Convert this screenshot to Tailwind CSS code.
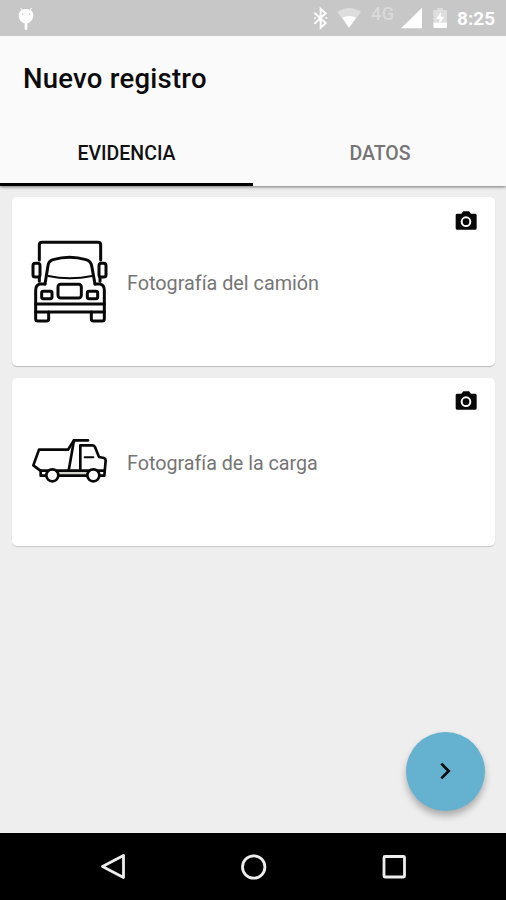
<!DOCTYPE html>
<html lang="es">
<head>
<meta charset="utf-8">
<meta name="viewport" content="width=device-width, initial-scale=1">
<title>Nuevo registro</title>
<script src="https://cdn.jsdelivr.net/npm/@tailwindcss/browser@4"></script>
</head>
<body class="font-[Roboto,sans-serif] bg-[#eeeeee]">
<div class="relative flex h-[900px] w-[506px] flex-col overflow-hidden bg-[#eeeeee]">
  <!-- Status bar -->
  <div class="z-20 flex h-[35.5px] shrink-0 items-start justify-between bg-[#c7c7c7]">
    <svg class="ml-4 h-9 w-5" viewBox="48 0 60 108" fill="#fff">
      <path d="M62 24l7 9M95 24l-7 9" stroke="#fff" stroke-width="3"/>
      <path d="M56 45C57 33 66 27 78 27s21 6 22 18c0 13-8 23-18 25v16a4 4 0 0 1-8 0V70C64 68 56 58 56 45z"/>
      <circle cx="68" cy="42" r="2.5" fill="#c7c7c7"/><circle cx="89" cy="42" r="2.5" fill="#c7c7c7"/>
    </svg>
    <div class="flex h-[35px]">
      <svg class="h-[35px] w-[71px]" viewBox="0 0 213 105">
        <path d="M43 38l34 31-15 14V27l15 13-34 31" fill="none" stroke="#fff" stroke-width="6"/>
        <path d="M42 54h6M76 54h6" stroke="#fff" stroke-width="5"/>
        <path d="M112 36Q147 12 183 36L147 83z" fill="#dddddd"/>
        <path d="M127 53Q147 43 168 53L147 83z" fill="#fff"/>
      </svg>
      <span class="mt-[5px] w-[30px] text-[18px] leading-[18px] font-medium tracking-[0.6px] text-[#dadada]">4G</span>
      <svg class="h-[35px] w-[55px]" viewBox="303 0 165 105">
        <path d="M303 85L366 23v62z" fill="#fff"/>
        <path d="M400 30h12v-6h17v6h12v40h-41z" fill="#dedede"/>
        <path d="M400 68h41v12q0 4-4 4h-33q-4 0-4-4z" fill="#fff"/>
        <path d="M423 36l-15 21h11l-2 16 16-23h-11z" fill="#fff"/>
      </svg>
      <span class="mt-[9px] mr-[10px] ml-px w-[39px] text-[19px] leading-[20px] font-bold whitespace-nowrap text-white">8:25</span>
    </div>
  </div>

  <!-- App bar and tabs -->
  <header class="z-10 flex h-[150.5px] shrink-0 flex-col bg-[#fafafa] shadow-[0_1px_3px_rgba(0,0,0,0.5)]">
    <h1 class="h-[85px] pt-[27px] pl-[23px] text-[27.5px] leading-[32px] font-medium tracking-[0.25px] text-[#0b0b0b]">Nuevo registro</h1>
    <nav class="grid flex-1 grid-cols-2 text-center text-[19.5px] leading-[24px] font-medium">
      <div class="border-b-[3px] border-black pt-[21px] text-[#111]">EVIDENCIA</div>
      <div class="pt-[21px] pl-px text-[#757575]">DATOS</div>
    </nav>
  </header>

  <main class="flex flex-1 flex-col gap-[12px] px-[11.5px] pt-[11px]">
    <section class="flex h-[169px] rounded-[5px] bg-white pl-2 shadow-[0_1px_1px_rgba(0,0,0,0.22)]">
      <svg class="mt-[33px] size-[100px]" viewBox="0 0 300 300" fill="none" stroke="#080808" stroke-width="9" stroke-linejoin="round" stroke-linecap="round">
        <path d="M58 90V45q0-8 8-8h168q8 0 8 8v45"/>
        <rect x="39" y="100" width="21" height="41" rx="7"/><rect x="237" y="100" width="21" height="41" rx="7"/>
        <path d="M58 142v12M240 142v12"/>
        <path d="M75 162L84 107Q86 93 99 89Q149 74 198 89Q212 93 215 107L225 162"/>
        <path d="M85 138Q149 152 216 138" stroke-width="6"/>
        <path d="M75 162H60Q47 165 47 181v65h206v-65q0-16-13-19H225"/>
        <rect x="114" y="163" width="70" height="41" rx="8"/>
        <rect x="65" y="184" width="31" height="22" rx="5"/><rect x="202" y="184" width="31" height="22" rx="5"/>
        <path d="M47 222h206M47 246v20q0 7 7 7h25q7 0 7-7v-20M214 246v20q0 7 7 7h25q7 0 7-7v-20"/>
      </svg>
      <p class="mt-[74px] ml-[7.5px] flex-1 text-[19.8px] leading-[26px] whitespace-nowrap text-[#757575]">Fotografía del camión</p>
      <svg class="mt-[14px] mr-[18px] h-[20px] w-[22px]" viewBox="0 0 66 60">
        <path fill="#080808" fill-rule="evenodd" d="M6 8h13l6-7h17l6 7h13q4 0 4 5v38q0 5-4 5H6q-4 0-4-5V13q0-5 4-5zm27 8a16 16 0 1 0 0 32a16 16 0 1 0 0-32zm0 6a10 10 0 1 1 0 20a10 10 0 1 1 0-20z"/>
      </svg>
    </section>
    <section class="flex h-[168px] rounded-[5px] bg-white pl-2 shadow-[0_1px_1px_rgba(0,0,0,0.16)]">
      <svg class="mt-[47px] h-[70px] w-[100px]" viewBox="0 0 300 210" fill="none" stroke="#080808" stroke-width="8" stroke-linejoin="round" stroke-linecap="round">
        <path d="M115 137h90v15h-90z" fill="#d5d5d0" stroke="none"/>
        <path d="M204 46H162L144 74H57L40 121 61 137H251"/>
        <path d="M162 46L146 137"/>
        <path d="M181 137V61h37q5 0 7 5l12 30 15 3q5 2 5 7l-4 46h-12"/>
        <path d="M62 137v15h17M115 152h87"/>
        <path d="M194 97h26" stroke-width="6"/>
        <circle cx="97" cy="151" r="18" fill="#fff"/><circle cx="220" cy="151" r="18" fill="#fff"/>
      </svg>
      <p class="mt-[73px] ml-[7.5px] flex-1 text-[19.7px] leading-[26px] whitespace-nowrap text-[#757575]">Fotografía de la carga</p>
      <svg class="mt-[13px] mr-[18px] h-[20px] w-[22px]" viewBox="0 0 66 60">
        <path fill="#080808" fill-rule="evenodd" d="M6 8h13l6-7h17l6 7h13q4 0 4 5v38q0 5-4 5H6q-4 0-4-5V13q0-5 4-5zm27 8a16 16 0 1 0 0 32a16 16 0 1 0 0-32zm0 6a10 10 0 1 1 0 20a10 10 0 1 1 0-20z"/>
      </svg>
    </section>
  </main>

  <!-- Floating action button -->
  <button aria-label="Siguiente" class="absolute right-[21.5px] bottom-[89.5px] flex size-[79px] items-center justify-center rounded-full bg-[#64b2cf] shadow-[0_5px_7px_rgba(0,0,0,0.28)]">
    <svg class="h-[18px] w-[12px]" viewBox="0 0 36 54" fill="none" stroke="#0a0a0a" stroke-width="8"><path d="M7 5l22 22L7 49"/></svg>
  </button>

  <!-- Navigation bar -->
  <footer class="h-[67px] shrink-0 bg-black">
    <svg class="h-[67px] w-[506px]" viewBox="0 833 506 67" fill="none" stroke="#eee" stroke-width="2.8" stroke-linejoin="round">
      <path d="M123.500 855.500v22L102.500 866.500z"/>
      <circle cx="253.700" cy="867" r="11.200"/>
      <rect x="384" y="856.500" width="20.500" height="20.500" rx="1"/>
    </svg>
  </footer>
</div>
</body>
</html>
